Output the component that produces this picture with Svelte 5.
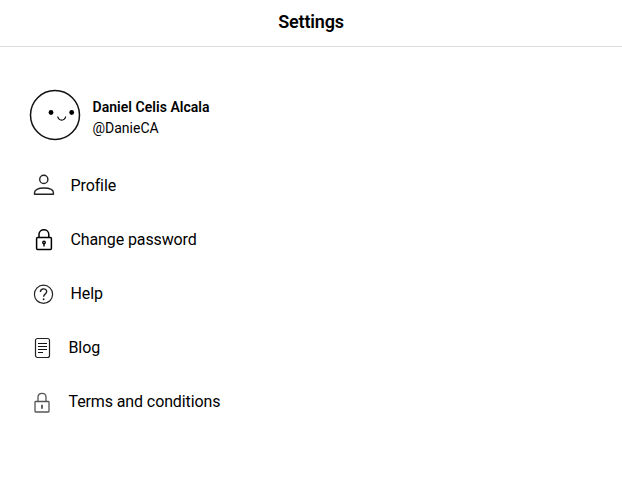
<script>
  const items = [
    { icon: 'profile', label: 'Profile' },
    { icon: 'password', label: 'Change password' },
    { icon: 'help', label: 'Help' },
    { icon: 'blog', label: 'Blog', narrow: true },
    { icon: 'terms', label: 'Terms and conditions', narrow: true }
  ];
</script>

<main>
  <header><h1>Settings</h1></header>

  <section class="user">
    <svg class="avatar" width="52" height="52" viewBox="0 0 52 52" fill="none">
      <circle cx="26" cy="26" r="24.5" stroke="#111" stroke-width="1.5" />
      <circle cx="22" cy="23.5" r="2.4" fill="#000" />
      <circle cx="42.7" cy="23.5" r="2.4" fill="#000" />
      <path d="M28.7 27.5c1 4.8 7 4.8 8 0" stroke="#000" stroke-width="1.2" />
    </svg>
    <div class="names">
      <strong>Daniel Celis Alcala</strong>
      <span>@DanieCA</span>
    </div>
  </section>

  <nav>
    {#each items as item}
      <a href="#{item.icon}" class:narrow={item.narrow}>
        <svg width="24" height="24" viewBox="0 0 24 24" fill="none">
          {#if item.icon === 'profile'}
            <g stroke="#222" stroke-width="1.4">
              <circle cx="11.8" cy="6.4" r="4.1" />
              <path d="M2.5 21.3v-1.5c0-3 3.5-4.8 9.3-4.8s9.6 1.8 9.6 4.8v1.5z" stroke-linejoin="round" />
            </g>
          {:else if item.icon === 'password'}
            <g stroke="#000" stroke-width="1.5">
              <rect x="4.6" y="10.6" width="14.8" height="12" rx="1" />
              <path d="M7 10.5V7.6c0-6.4 9.8-6.4 9.8 0v2.9" />
            </g>
            <circle cx="12" cy="15.5" r="1.9" fill="#000" />
            <circle cx="12" cy="15.4" r=".5" fill="#fff" />
            <path d="M12 16.5v3" stroke="#000" stroke-width="1.4" />
          {:else if item.icon === 'help'}
            <circle cx="11.5" cy="13.3" r="9.1" stroke="#222" stroke-width="1.2" />
            <path d="M8.4 11c0-4.2 6.3-4.1 6.3-.4 0 2.6-3.1 2.5-3.1 5.2" stroke="#222" stroke-width="1.4" />
            <circle cx="11.6" cy="18.3" r=".95" fill="#222" />
          {:else if item.icon === 'blog'}
            <rect x="3.5" y="3.5" width="14" height="19" rx="2" stroke="#222" stroke-width="1.2" />
            <path d="M6 8.5h9M6 11.5h9M6 14.5h9M6 17.5h5" stroke="#111" stroke-width="1.1" />
          {:else}
            <g stroke="#555" stroke-width="1.3">
              <rect x="3" y="12.5" width="14" height="10.5" rx=".8" />
              <path d="M6 12.5V8.3c0-5.3 8-5.3 8 0v4.2" />
            </g>
            <path d="M10 15.8v4" stroke="#222" stroke-width="1.4" />
          {/if}
        </svg>
        <span>{item.label}</span>
      </a>
    {/each}
  </nav>
</main>

<style>
  :global(body) {
    margin: 0;
    background: #fff;
  }
  main {
    height: 483px;
    overflow: hidden;
    color: #000;
    font-family: Roboto, 'Liberation Sans', sans-serif;
  }
  header {
    box-sizing: border-box;
    height: 47px;
    padding-top: 11px;
    border-bottom: 1px solid #dedede;
    text-align: center;
  }
  h1 {
    margin: 0;
    font-size: 18px;
    line-height: 22px;
    font-weight: 600;
    letter-spacing: -0.18px;
  }
  .user {
    display: flex;
    align-items: center;
    gap: 11.5px;
    padding: 42px 0 0 29px;
  }
  .avatar {
    flex: none;
  }
  .names {
    display: flex;
    flex-direction: column;
    padding-top: 6px;
    font-size: 14px;
    line-height: 21px;
  }
  strong {
    font-weight: 600;
    letter-spacing: 0.04px;
  }
  nav {
    display: grid;
    grid-auto-rows: 54px;
    padding: 17px 0 0 32px;
  }
  a {
    display: flex;
    align-items: center;
    gap: 14.5px;
    color: inherit;
    font-size: 16px;
    line-height: 20px;
    letter-spacing: -0.11px;
    text-decoration: none;
  }
  a span {
    padding-top: 2px;
  }
  a.narrow {
    gap: 12.5px;
  }
</style>
